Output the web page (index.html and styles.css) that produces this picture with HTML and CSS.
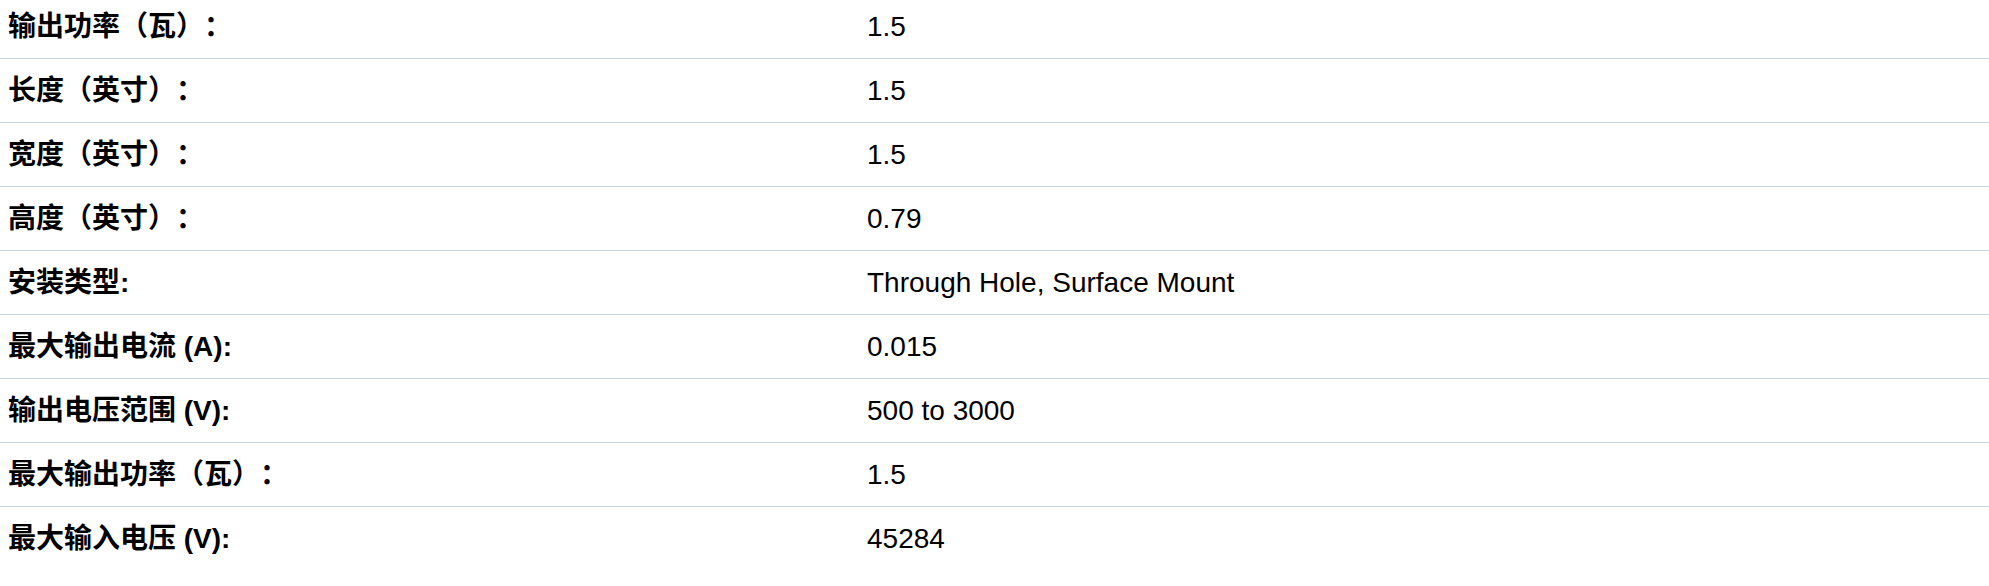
FILE: index.html
```html
<!DOCTYPE html>
<html lang="zh">
<head>
<meta charset="utf-8">
<title>Specs</title>
<link rel="stylesheet" href="styles.css">
</head>
<body>
<div class="specs">
  <div class="row"><div class="label">输出功率（瓦）：</div><div class="value">1.5</div></div>
  <div class="row"><div class="label">长度（英寸）：</div><div class="value">1.5</div></div>
  <div class="row"><div class="label">宽度（英寸）：</div><div class="value">1.5</div></div>
  <div class="row"><div class="label">高度（英寸）：</div><div class="value">0.79</div></div>
  <div class="row"><div class="label">安装类型:</div><div class="value">Through Hole, Surface Mount</div></div>
  <div class="row"><div class="label">最大输出电流 (A):</div><div class="value">0.015</div></div>
  <div class="row"><div class="label">输出电压范围 (V):</div><div class="value">500 to 3000</div></div>
  <div class="row"><div class="label">最大输出功率（瓦）：</div><div class="value">1.5</div></div>
  <div class="row last"><div class="label">最大输入电压 (V):</div><div class="value">45284</div></div>
</div>
</body>
</html>
```

FILE: styles.css
```css
html, body {
  margin: 0;
  padding: 0;
  background: #ffffff;
}

body {
  font-family: "Liberation Sans", Arial, "Noto Sans CJK SC", sans-serif;
  font-size: 28px;
  color: #000000;
  text-spacing-trim: space-all;
}

.specs {
  margin-top: -5px;
  display: flex;
  flex-direction: column;
}

.row {
  display: grid;
  grid-template-columns: 859px 1fr;
  height: 63px;
  border-bottom: 1px solid #c9d3e1;
}

.row.last {
  border-bottom: none;
}

.label,
.value {
  display: flex;
  align-items: center;
  padding: 0 8px;
  line-height: 1;
}

.label {
  font-weight: bold;
}
```
